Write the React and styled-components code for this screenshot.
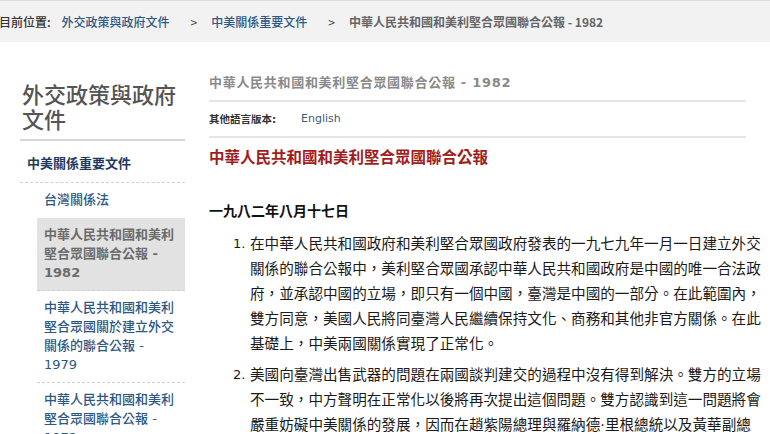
import React from 'react'
import styled, { createGlobalStyle } from 'styled-components'

const GlobalStyle = createGlobalStyle`
  body {
    margin: 0;
    background: #fff;
    font-family: "DejaVu Sans", "Noto Sans CJK TC", sans-serif;
    color: #222;
  }
`

const Breadcrumb = styled.div`
  height: 41px;
  border-top: 1px solid #dcdcdc;
  background: #f2f2f2;
  display: flex;
  align-items: center;
  font-family: "Noto Sans CJK TC", sans-serif;
  font-size: 12px;
  white-space: nowrap;
`
const CrumbLabel = styled.span`
  color: #333;
  font-weight: 500;
  margin-left: -1px;
  margin-right: 11px;
`
const CrumbLink = styled.a`
  color: #2c5886;
  font-weight: 500;
  text-decoration: none;
`
const CrumbSep = styled.span`
  color: #444;
  padding: 0 14px 0 21px;
`
const CrumbCurrent = styled.span`
  color: #666;
  font-weight: 700;
`

const Body = styled.div`
  display: flex;
  gap: 24px;
  padding-left: 20px;
`

const Sidebar = styled.aside`
  width: 165px;
  flex-shrink: 0;
  padding-top: 41px;
`
const SideTitle = styled.h2`
  margin: 0;
  padding: 0 0 6px 2px;
  font-size: 22px;
  line-height: 25px;
  font-weight: 500;
  color: #555;
  border-bottom: 2px solid #d6d6d6;
`
const SideSection = styled.div`
  padding: 13px 7px 9px;
  font-size: 13px;
  line-height: 19px;
  font-weight: 700;
  color: #1e3a5f;
  border-bottom: 1px dashed #d0d0d0;
`
const SubList = styled.ul`
  list-style: none;
  margin: 0 0 0 17px;
  padding: 0;
`
const SubItem = styled.li`
  padding: 7px 8px 8px 7px;
  font-size: 13px;
  line-height: 19px;
  font-weight: ${p => (p.$active ? 700 : 500)};
  color: ${p => (p.$active ? '#6b6b6b' : '#2c5886')};
  background: ${p => (p.$active ? '#e2e2e2' : 'transparent')};
  border-bottom: 1px dashed ${p => (p.$plain ? 'transparent' : '#d0d0d0')};
`

const Main = styled.main`
  width: 560px;
  padding-top: 32px;
`
const PageTitle = styled.div`
  margin-right: 23px;
  font-size: 13px;
  line-height: 18px;
  letter-spacing: 0.7px;
  font-weight: 700;
  color: #8a8a8a;
  padding-bottom: 8px;
  border-bottom: 2px solid #e6e6e6;
`
const LangRow = styled.div`
  margin-right: 23px;
  display: flex;
  align-items: center;
  padding: 8px 0;
  line-height: 18px;
  border-bottom: 2px solid #e6e6e6;
`
const LangLabel = styled.span`
  font-size: 10.5px;
  font-weight: 700;
  color: #333;
  width: 92px;
`
const LangLink = styled.a`
  font-size: 11px;
  color: #3a5a80;
  text-decoration: none;
`
const Heading = styled.h1`
  margin: 9px 0 0;
  font-size: 15.5px;
  line-height: 22px;
  font-weight: 700;
  color: #a11d1d;
`
const DateLine = styled.p`
  margin: 32px 0 0;
  font-size: 14px;
  line-height: 20px;
  font-weight: 700;
  color: #111;
`
const List = styled.ol`
  list-style: none;
  margin: 10px 0 0;
  padding: 0 0 0 24px;
`
const Item = styled.li`
  display: flex;
  margin-bottom: 6px;
  font-size: 14.6px;
  line-height: 25px;
  color: #1a1a1a;
`
const Num = styled.span`
  width: 17px;
  flex-shrink: 0;
  font-size: 13px;
`
const ItemText = styled.span`
  width: 514px;
`

const sideItems = [
  { text: '台灣關係法', plain: true },
  { text: '中華人民共和國和美利堅合眾國聯合公報 - 1982', active: true },
  { text: '中華人民共和國和美利堅合眾國關於建立外交關係的聯合公報 - 1979' },
  { text: '中華人民共和國和美利堅合眾國聯合公報 - 1972' },
]

const paragraphs = [
  '在中華人民共和國政府和美利堅合眾國政府發表的一九七九年一月一日建立外交關係的聯合公報中，美利堅合眾國承認中華人民共和國政府是中國的唯一合法政府，並承認中國的立場，即只有一個中國，臺灣是中國的一部分。在此範圍內，雙方同意，美國人民將同臺灣人民繼續保持文化、商務和其他非官方關係。在此基礎上，中美兩國關係實現了正常化。',
  '美國向臺灣出售武器的問題在兩國談判建交的過程中沒有得到解決。雙方的立場不一致，中方聲明在正常化以後將再次提出這個問題。雙方認識到這一問題將會嚴重妨礙中美關係的發展，因而在趙紫陽總理與羅納德·里根總統以及黃華副總理和亞歷山大·黑格國務卿於一九八一年十月會見時以及此後，雙方進一步就此進行了討論。',
]

export default function App() {
  return (
    <>
      <GlobalStyle />
      <Breadcrumb>
        <CrumbLabel>目前位置:</CrumbLabel>
        <CrumbLink href="#">外交政策與政府文件</CrumbLink>
        <CrumbSep>&gt;</CrumbSep>
        <CrumbLink href="#">中美關係重要文件</CrumbLink>
        <CrumbSep>&gt;</CrumbSep>
        <CrumbCurrent>中華人民共和國和美利堅合眾國聯合公報 - 1982</CrumbCurrent>
      </Breadcrumb>
      <Body>
        <Sidebar>
          <SideTitle>外交政策與政府文件</SideTitle>
          <SideSection>中美關係重要文件</SideSection>
          <SubList>
            {sideItems.map(item => (
              <SubItem key={item.text} $active={item.active} $plain={item.plain}>
                {item.text}
              </SubItem>
            ))}
          </SubList>
        </Sidebar>
        <Main>
          <PageTitle>中華人民共和國和美利堅合眾國聯合公報 - 1982</PageTitle>
          <LangRow>
            <LangLabel>其他語言版本:</LangLabel>
            <LangLink href="#">English</LangLink>
          </LangRow>
          <Heading>中華人民共和國和美利堅合眾國聯合公報</Heading>
          <DateLine>一九八二年八月十七日</DateLine>
          <List>
            {paragraphs.map((p, i) => (
              <Item key={i}>
                <Num>{i + 1}.</Num>
                <ItemText>{p}</ItemText>
              </Item>
            ))}
          </List>
        </Main>
      </Body>
    </>
  )
}
